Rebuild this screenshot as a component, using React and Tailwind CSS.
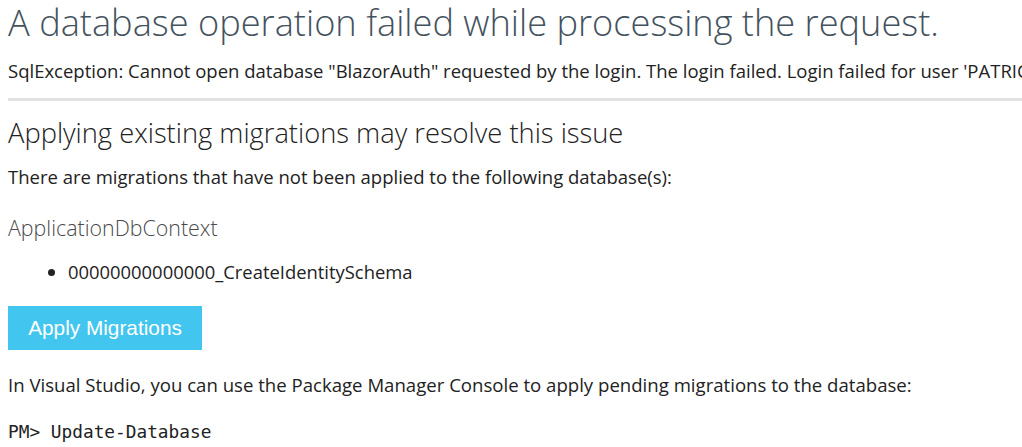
export default function App() {
  return (
    <div className="w-[1022px] h-[447px] overflow-hidden bg-white pl-2 text-[#222]" style={{ fontFamily: '"Open Sans", sans-serif' }}>
      <h1 className="text-[36.2px] leading-[44px] font-light text-[#44525e] whitespace-nowrap pt-0">
        A database operation failed while processing the request.
      </h1>
      <p className="mt-[14px] text-[18.5px] leading-[26px] whitespace-nowrap">
        SqlException: Cannot open database "BlazorAuth" requested by the login. The login failed. Login failed for user 'PATRICK\patri'.
      </p>
      <div className="mt-[14px] h-[3px] bg-[#e2e2e2]"></div>
      <h2 className="mt-[14px] text-[27.3px] leading-[36px] font-light text-[#222] whitespace-nowrap">
        Applying existing migrations may resolve this issue
      </h2>
      <p className="mt-[13px] text-[18.5px] leading-[26px] whitespace-nowrap">
        There are migrations that have not been applied to the following database(s):
      </p>
      <h3 className="mt-[24px] text-[21.4px] leading-[28px] font-light text-[#4a4a4a] whitespace-nowrap">
        ApplicationDbContext
      </h3>
      <ul className="mt-[17px] pl-[60px] list-disc text-[18.4px] leading-[26px]">
        <li>00000000000000_CreateIdentitySchema</li>
      </ul>
      <div className="mt-[21px] flex">
        <button className="w-[194px] h-[44px] bg-[#42c5ee] text-white text-[20.8px]" style={{ fontFamily: '"Liberation Sans", Arial, sans-serif' }}>
          Apply Migrations
        </button>
      </div>
      <p className="mt-[22px] text-[18.6px] leading-[26px] whitespace-nowrap">
        In Visual Studio, you can use the Package Manager Console to apply pending migrations to the database:
      </p>
      <p className="mt-[21px] text-[17.8px] leading-[26px] whitespace-nowrap" style={{ fontFamily: '"DejaVu Sans Mono", monospace' }}>
        PM&gt; Update-Database
      </p>
    </div>
  );
}
